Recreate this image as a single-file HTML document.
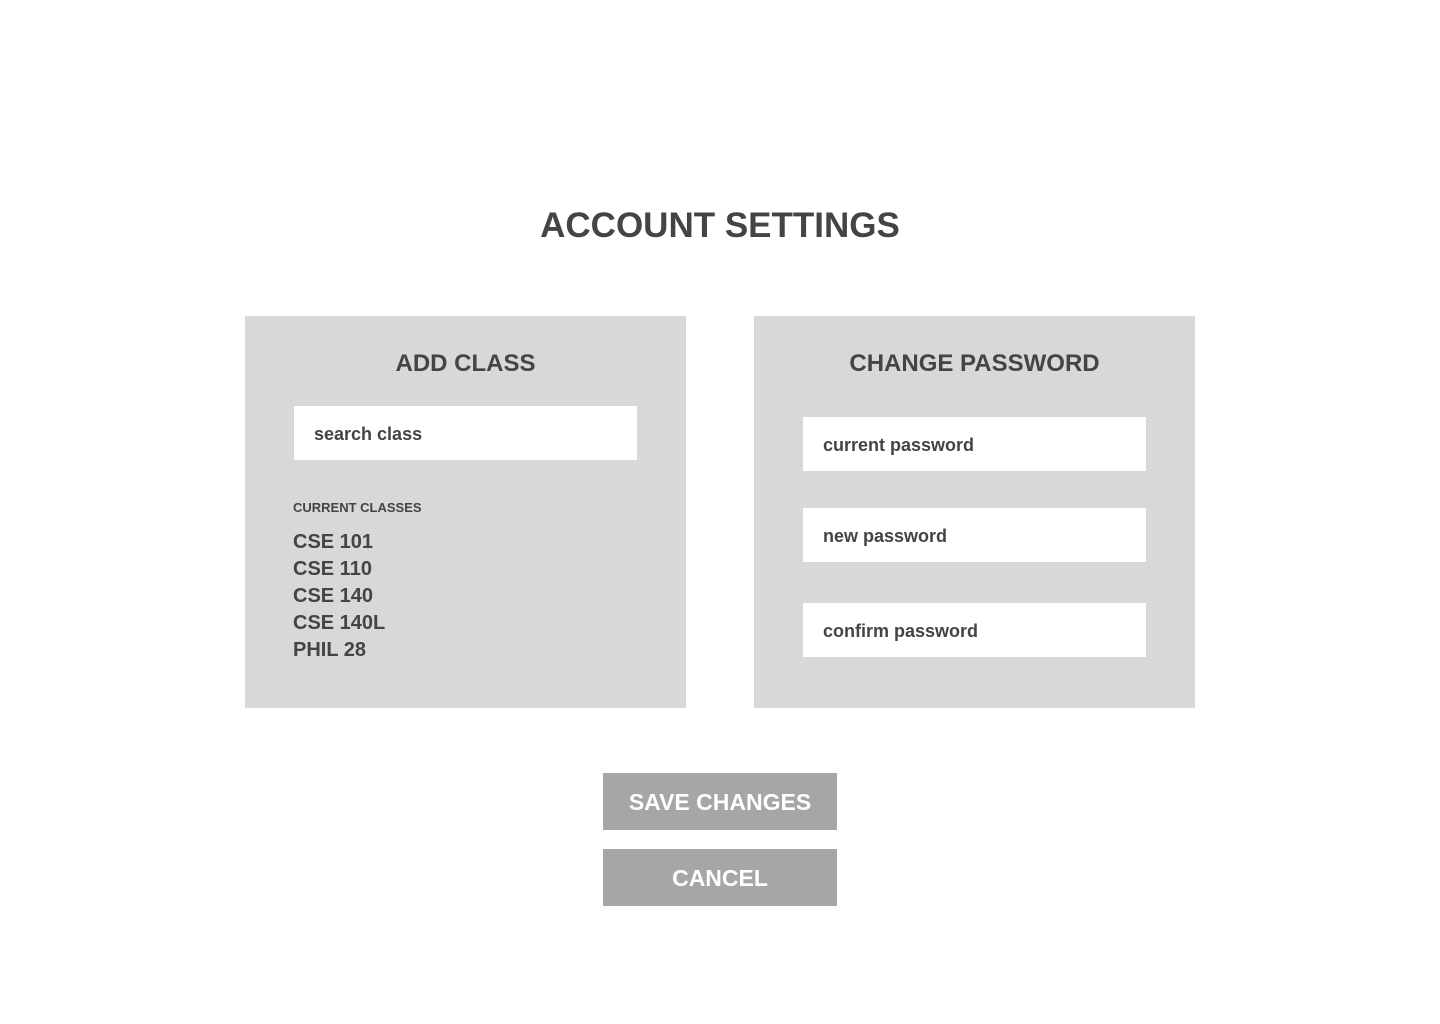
<!DOCTYPE html>
<html><head><style>
body{margin:0;width:1440px;height:1024px;background:#fff;position:relative;font-family:"Liberation Sans",Arial,sans-serif;font-weight:bold;color:#444;overflow:hidden}
.a{position:absolute}
.panel{position:absolute;top:316px;width:441px;height:392px;background:#d8d8d8}
.h{position:absolute;left:0;width:100%;text-align:center;font-size:24px;top:35px;line-height:26px}
.in{position:absolute;background:#fff;width:343px;height:54px;left:49px;font-size:18px;line-height:56px;padding-left:20px;box-sizing:border-box}
.btn{position:absolute;left:603px;width:234px;height:57px;background:#a6a6a6;color:#fff;font-size:23px;text-align:center;line-height:59px}
</style></head><body>
<div class="a" style="left:0;width:1440px;top:206px;text-align:center;font-size:35px;line-height:40px">ACCOUNT SETTINGS</div>
<div class="panel" style="left:245px">
<div class="h">ADD CLASS</div>
<div class="in" style="top:90px">search class</div>
<div class="a" style="left:48px;top:184px;font-size:13px">CURRENT CLASSES</div>
<div class="a" style="left:48px;top:213px;font-size:20px;line-height:27px">CSE 101<br>CSE 110<br>CSE 140<br>CSE 140L<br>PHIL 28</div>
</div>
<div class="panel" style="left:754px">
<div class="h">CHANGE PASSWORD</div>
<div class="in" style="top:101px">current password</div>
<div class="in" style="top:192px">new password</div>
<div class="in" style="top:287px">confirm password</div>
</div>
<div class="btn" style="top:773px">SAVE CHANGES</div>
<div class="btn" style="top:849px">CANCEL</div>
</body></html>
